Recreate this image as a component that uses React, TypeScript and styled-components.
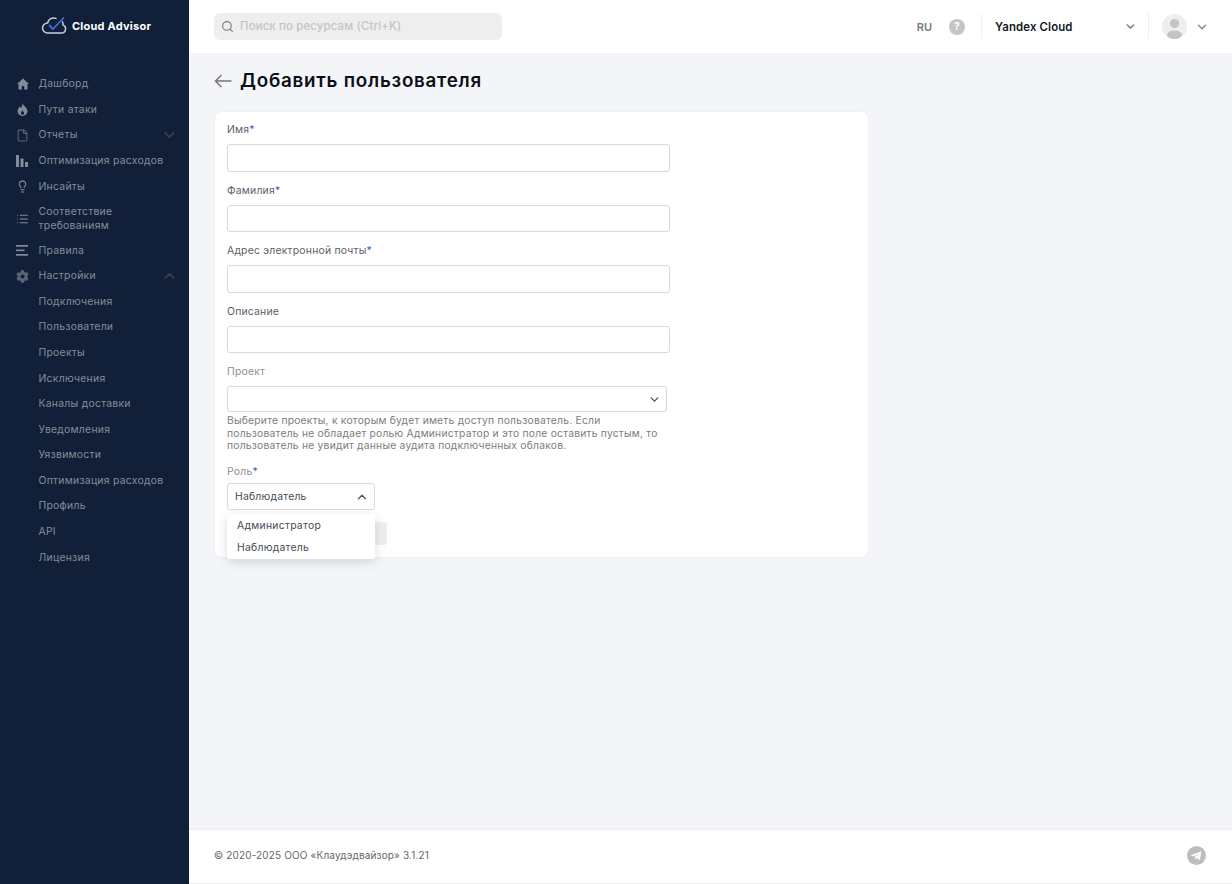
import React from "react";
import styled, { createGlobalStyle } from "styled-components";
import { ChevronDown, ChevronUp, Search, File, Lightbulb, List } from "lucide-react";
import { FaCog } from "react-icons/fa";

const Global = createGlobalStyle`
  html, body { margin: 0; padding: 0; height: 100%; }
  body { font-family: Inter, "Open Sans", "Noto Sans", sans-serif; background: #f3f5f9; }
  * { box-sizing: border-box; }
`;

const Page = styled.div`display: flex; width: 1232px; height: 884px; overflow: hidden;`;
const Sidebar = styled.aside`width: 189px; flex: none; background: #111f38; display: flex; flex-direction: column;`;
const Brand = styled.div`height: 71.4px; display: flex; align-items: flex-start; padding: 15px 0 0 41px; gap: 5px; color: #fff; font-size: 11px; font-weight: 700; letter-spacing: .02em;
  span { line-height: 22.5px; }
`;
const Nav = styled.nav`display: flex; flex-direction: column;`;
const Item = styled.div<{ $tall?: boolean }>`
  height: ${p => (p.$tall ? "38.4px" : "25.6px")};
  display: flex; align-items: center; padding-left: 16px; color: #868d9b;
  font-size: 10.4px; line-height: 14px; letter-spacing: .025em; position: relative;
`;
const IconSlot = styled.span<{ $dim?: boolean }>`width: 13px; height: 13px; flex: none; margin-right: 9.5px; display: flex; align-items: center; justify-content: center; color: ${p => (p.$dim ? "#5b6475" : "#848b98")};`;
const SubItem = styled(Item)`padding-left: 38.5px;`;
const NavChevron = styled.span`position: absolute; left: 161px; top: 50%; transform: translateY(-50%); display: flex; color: #333f56;`;

const Content = styled.div`flex: 1; display: flex; flex-direction: column; min-width: 0;`;
const Header = styled.header`height: 53px; flex: none; background: #fff; display: flex; align-items: center; padding-left: 25px; position: relative;`;
const SearchBox = styled.div`width: 288px; height: 27px; background: #eeeeee; border-radius: 6px; display: flex; align-items: center; padding: 0 0 1px 7px; gap: 6px; color: #c4c4c4; font-size: 11.4px; font-weight: 500; letter-spacing: .014em; svg { color: #777; }`;
const HeaderRight = styled.div`margin-left: auto; display: flex; align-items: center; height: 100%; padding-right: 23px;`;
const Lang = styled.span`font-size: 11px; font-weight: 600; color: #7a7a7a; margin-right: 17px;`;
const Help = styled.span`width: 16px; height: 16px; border-radius: 50%; background: #c4c4c4; color: #fff; font-size: 10.5px; font-weight: 700; display: flex; align-items: center; justify-content: center; margin-right: 16px;`;
const Sep = styled.span`width: 1px; height: 25px; background: #eeeeee;`;
const Cloud = styled.div`width: 166px; display: flex; align-items: center; justify-content: space-between; padding: 0 11px 0 13px; font-size: 11.4px; font-weight: 600; color: #111827; letter-spacing: .012em; svg { color: #666; }`;
const UserBox = styled.div`display: flex; align-items: center; padding-left: 13px; gap: 8px; svg.chev { color: #888; }`;
const Avatar = styled.span`width: 25px; height: 25px; border-radius: 50%; background: #eeeeee; overflow: hidden; display: flex;`;

const Main = styled.main`flex: 1; padding: 17px 25px 0; background: #f3f5f9;`;
const TitleRow = styled.div`display: flex; align-items: center; gap: 8px; height: 21px; margin-bottom: 20px;`;
const Title = styled.h1`margin: 0; font-size: 18.8px; line-height: 21px; font-weight: 600; color: #0c0f16; letter-spacing: .04em;`;
const Card = styled.section`position: relative; width: 655px; height: 447px; background: #fff; border: 1px solid #eef0f4; border-radius: 8px; padding: 10px 12px;`;
const Field = styled.div<{ $gap?: number }>`display: flex; flex-direction: column; margin-bottom: ${p => p.$gap ?? 11}px;`;
const Label = styled.label<{ $muted?: boolean; $tight?: boolean }>`height: 16px; line-height: 16px; margin-bottom: ${p => (p.$tight ? 3.5 : 6)}px; font-size: 10.4px; letter-spacing: .02em; color: ${p => (p.$muted ? "#8f8f8f" : "#5c6068")}; i { font-style: normal; color: #3559c7; }`;
const Input = styled.div`width: 443px; height: 27.5px; background: #fff; border: 1px solid #d9d9d9; border-radius: 3px;`;
const SelectBox = styled.div<{ $w: number; $h: number }>`width: ${p => p.$w}px; height: ${p => p.$h}px; background: #fff; border: 1px solid #d9d9d9; border-radius: 3px; display: flex; align-items: center; justify-content: space-between; padding: 0 5px 0 7px; font-size: 10.4px; letter-spacing: .02em; color: #444b55; svg { color: #555; }`;
const HelpText = styled.p`width: 440px; margin: 2px 0 12px; font-size: 10.3px; line-height: 12.6px; letter-spacing: .022em; color: #7d7d7d;`;
const GhostButton = styled.div`position: absolute; left: 12px; top: 410px; width: 160px; height: 23px; background: #efefef; border-radius: 3px;`;
const Menu = styled.div`position: absolute; left: 12px; top: 402px; width: 148px; height: 45px; background: #fff; border-radius: 3px; box-shadow: 0 3px 12px rgba(0,0,0,.14);`;
const MenuItem = styled.div`height: 22px; display: flex; align-items: center; padding-left: 10px; font-size: 10.4px; letter-spacing: .025em; color: #444b55;`;
const Footer = styled.footer`height: 55px; flex: none; background: #fff; border-top: 1px solid #ebedf1; border-bottom: 1px solid #ebedf1; display: flex; align-items: center; justify-content: space-between; padding: 0 26px 3px 25px; font-size: 10px; letter-spacing: .015em; color: #666;`;

const Logo = () => (
  <svg width="26" height="20" viewBox="0 0 26 20" fill="none">
    <path d="M15 3.4A6.2 6.2 0 0 0 6.6 8 5 5 0 0 0 6.5 18h14a4.2 4.2 0 0 0 1.4-8.1 5 5 0 0 0-.4-3" stroke="#c9d0de" strokeWidth="1.5" strokeLinecap="round" />
    <path d="M8.5 10.5l3.5 3.5L22.5 3" stroke="#3f6ee8" strokeWidth="1.8" strokeLinecap="round" strokeLinejoin="round" />
  </svg>
);
const HomeIcon = () => (
  <svg width="12" height="12" viewBox="0 0 12 12" fill="currentColor"><path fillRule="evenodd" d="M6 .5 12 6h-1.5v5.5h-9V6H0ZM4.8 8v3.5h2.4V8Z" /></svg>
);
const FlameIcon = () => (
  <svg width="11" height="13" viewBox="0 0 11 13" fill="currentColor"><path fillRule="evenodd" d="M5.5 0c.6 3 5 4.5 5 8.2a5 4.8 0 0 1-10 0C.5 6.2 2 5 2.6 3.4c1 .5 1.4 1.1 1.5 1.7C4.9 3.6 5.2 2 5.5 0ZM5.5 7.2c-.4 1.2-1.6 1.6-1.6 3a1.6 1.6 0 0 0 3.2 0c0-1.4-1.2-1.8-1.6-3Z" /></svg>
);
const Bars = () => (
  <svg width="13" height="12" viewBox="0 0 13 12" fill="currentColor">
    <rect x="0" y="0" width="3" height="12" /><rect x="4.5" y="3.5" width="3" height="8.5" /><rect x="9" y="7" width="3" height="5" />
  </svg>
);
const RuleLines = () => (
  <svg width="13" height="11" viewBox="0 0 13 11" fill="currentColor">
    <rect x="0" y="0" width="12" height="1.7" /><rect x="0" y="4.5" width="8.5" height="1.7" /><rect x="0" y="9" width="12" height="1.7" />
  </svg>
);
const BackArrow = () => (
  <svg width="18" height="14" viewBox="0 0 18 14" fill="none" stroke="#777" strokeWidth="1.5"><path d="M17.5 7H1.5M7.5 1 1.5 7l6 6" /></svg>
);
const UserSilhouette = () => (
  <svg width="25" height="25" viewBox="0 0 25 25" fill="#c4c4c4"><circle cx="12.5" cy="9.5" r="4.6" /><ellipse cx="12.5" cy="21" rx="7.6" ry="4.6" /></svg>
);
const Telegram = () => (
  <svg width="19" height="19" viewBox="0 0 19 19">
    <circle cx="9.5" cy="9.5" r="9.5" fill="#bdbdbd" />
    <path d="M3.8 9.3l10.6-4.1-1.7 9-3-2.2-1.6 1.5-.3-2.4 4.4-3.9-5.5 3.4z" fill="#fff" />
  </svg>
);

const subs = ["Подключения", "Пользователи", "Проекты", "Исключения", "Каналы доставки", "Уведомления", "Уязвимости", "Оптимизация расходов", "Профиль", "API", "Лицензия"];

export default function App() {
  return (
    <Page>
      <Global />
      <Sidebar>
        <Brand><Logo /><span>Cloud Advisor</span></Brand>
        <Nav>
          <Item><IconSlot><HomeIcon /></IconSlot>Дашборд</Item>
          <Item><IconSlot><FlameIcon /></IconSlot>Пути атаки</Item>
          <Item><IconSlot $dim><File size={13} /></IconSlot>Отчеты<NavChevron><ChevronDown size={17} strokeWidth={2.6} /></NavChevron></Item>
          <Item><IconSlot><Bars /></IconSlot>Оптимизация расходов</Item>
          <Item><IconSlot><Lightbulb size={13} /></IconSlot>Инсайты</Item>
          <Item $tall><IconSlot><List size={14} strokeWidth={2} /></IconSlot><span>Соответствие<br />требованиям</span></Item>
          <Item><IconSlot><RuleLines /></IconSlot>Правила</Item>
          <Item><IconSlot $dim><FaCog size={13} /></IconSlot>Настройки<NavChevron><ChevronUp size={17} strokeWidth={2.6} /></NavChevron></Item>
          {subs.map((s, i) => <SubItem key={i}>{s}</SubItem>)}
        </Nav>
      </Sidebar>
      <Content>
        <Header>
          <SearchBox><Search size={13} />Поиск по ресурсам (Ctrl+K)</SearchBox>
          <HeaderRight>
            <Lang>RU</Lang>
            <Help>?</Help>
            <Sep />
            <Cloud>Yandex Cloud<ChevronDown size={13} strokeWidth={2.4} /></Cloud>
            <Sep />
            <UserBox><Avatar><UserSilhouette /></Avatar><ChevronDown className="chev" size={14} strokeWidth={2.4} /></UserBox>
          </HeaderRight>
        </Header>
        <Main>
          <TitleRow><BackArrow /><Title>Добавить пользователя</Title></TitleRow>
          <Card>
            <Field><Label>Имя<i>*</i></Label><Input /></Field>
            <Field><Label>Фамилия<i>*</i></Label><Input /></Field>
            <Field><Label>Адрес электронной почты<i>*</i></Label><Input /></Field>
            <Field><Label>Описание</Label><Input /></Field>
            <Field $gap={0}>
              <Label $muted>Проект</Label>
              <SelectBox $w={440} $h={26}><span /><ChevronDown size={13} strokeWidth={2.6} /></SelectBox>
              <HelpText>Выберите проекты, к которым будет иметь доступ пользователь. Если пользователь не обладает ролью Администратор и это поле оставить пустым, то пользователь не увидит данные аудита подключенных облаков.</HelpText>
            </Field>
            <Field $gap={0}>
              <Label $muted $tight>Роль<i>*</i></Label>
              <SelectBox $w={148} $h={27}>Наблюдатель<ChevronUp size={14} strokeWidth={2.4} /></SelectBox>
            </Field>
            <GhostButton />
            <Menu><MenuItem>Администратор</MenuItem><MenuItem>Наблюдатель</MenuItem></Menu>
          </Card>
        </Main>
        <Footer><span>© 2020-2025 ООО «Клаудэдвайзор» 3.1.21</span><Telegram /></Footer>
      </Content>
    </Page>
  );
}
